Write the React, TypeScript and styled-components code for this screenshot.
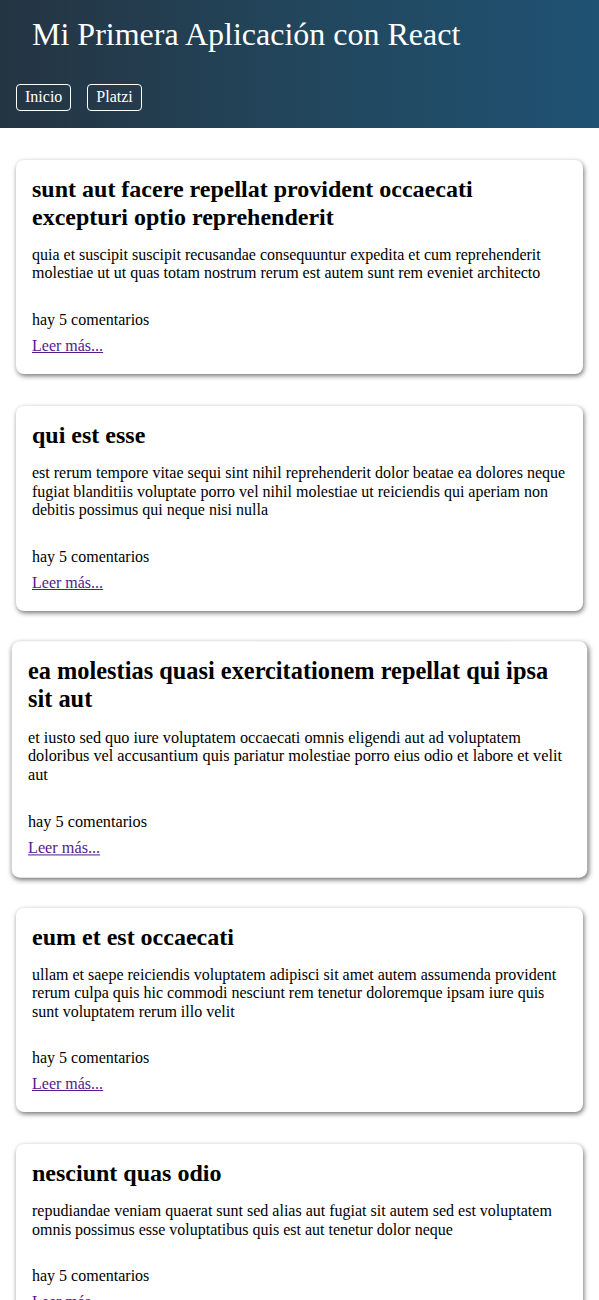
import React from "react";
import styled, { createGlobalStyle } from "styled-components";

const GlobalStyle = createGlobalStyle`
  html, body { margin: 0; padding: 0; background: #ffffff; }
  body { font-family: "Liberation Serif", "Times New Roman", serif; font-size: 16px; color: #000; }
`;

const Header = styled.header`
  background: linear-gradient(90deg, #243442 0%, #22465c 50%, #1f5273 100%);
  padding: 16px 16px 17px;
  display: flex;
  flex-direction: column;
  gap: 31px;
`;

const Title = styled.h1`
  margin: 0 16px;
  font-size: 32px;
  font-weight: normal;
  line-height: 37px;
  color: #ffffff;
`;

const Nav = styled.nav`
  display: flex;
  gap: 16px;
`;

const NavButton = styled.a`
  display: inline-block;
  border: 1px solid #ffffff;
  border-radius: 4px;
  padding: 3px 8px 4px;
  line-height: 18px;
  color: #ffffff;
  text-decoration: none;
  font-size: 16px;
`;

const Main = styled.main`
  padding: 32px 16px;
  display: flex;
  flex-direction: column;
  gap: 32px;
`;

const Card = styled.article<{ $raised?: boolean }>`
  background: #ffffff;
  border-radius: 8px;
  box-shadow: 1px 2px 5px rgba(0, 0, 0, 0.55);
  padding: 15px 16px 19.5px;
  transform: ${(p) => (p.$raised ? "scale(1.015)" : "none")};
`;

const CardTitle = styled.h2`
  margin: 0 0 15px;
  font-size: 24px;
  line-height: 28px;
  font-weight: bold;
`;

const CardBody = styled.p`
  margin: 0 0 28px;
  font-size: 16px;
  line-height: 18.4px;
`;

const Comments = styled.p`
  margin: 0 0 8px;
  line-height: 18px;
`;

const ReadMore = styled.a`
  display: block;
  line-height: 18px;
  color: #551a8b;
  text-decoration: underline;
`;

const posts = [
  {
    title: "sunt aut facere repellat provident occaecati excepturi optio reprehenderit",
    body: "quia et suscipit suscipit recusandae consequuntur expedita et cum reprehenderit molestiae ut ut quas totam nostrum rerum est autem sunt rem eveniet architecto",
  },
  {
    title: "qui est esse",
    body: "est rerum tempore vitae sequi sint nihil reprehenderit dolor beatae ea dolores neque fugiat blanditiis voluptate porro vel nihil molestiae ut reiciendis qui aperiam non debitis possimus qui neque nisi nulla",
  },
  {
    title: "ea molestias quasi exercitationem repellat qui ipsa sit aut",
    body: "et iusto sed quo iure voluptatem occaecati omnis eligendi aut ad voluptatem doloribus vel accusantium quis pariatur molestiae porro eius odio et labore et velit aut",
    raised: true,
  },
  {
    title: "eum et est occaecati",
    body: "ullam et saepe reiciendis voluptatem adipisci sit amet autem assumenda provident rerum culpa quis hic commodi nesciunt rem tenetur doloremque ipsam iure quis sunt voluptatem rerum illo velit",
  },
  {
    title: "nesciunt quas odio",
    body: "repudiandae veniam quaerat sunt sed alias aut fugiat sit autem sed est voluptatem omnis possimus esse voluptatibus quis est aut tenetur dolor neque",
  },
];

export default function App() {
  return (
    <>
      <GlobalStyle />
      <Header>
        <Title>Mi Primera Aplicación con React</Title>
        <Nav>
          <NavButton href="#">Inicio</NavButton>
          <NavButton href="#">Platzi</NavButton>
        </Nav>
      </Header>
      <Main>
        {posts.map((p) => (
          <Card key={p.title} $raised={p.raised}>
            <CardTitle>{p.title}</CardTitle>
            <CardBody>{p.body}</CardBody>
            <Comments>hay 5 comentarios</Comments>
            <ReadMore href="#">Leer más...</ReadMore>
          </Card>
        ))}
      </Main>
    </>
  );
}
